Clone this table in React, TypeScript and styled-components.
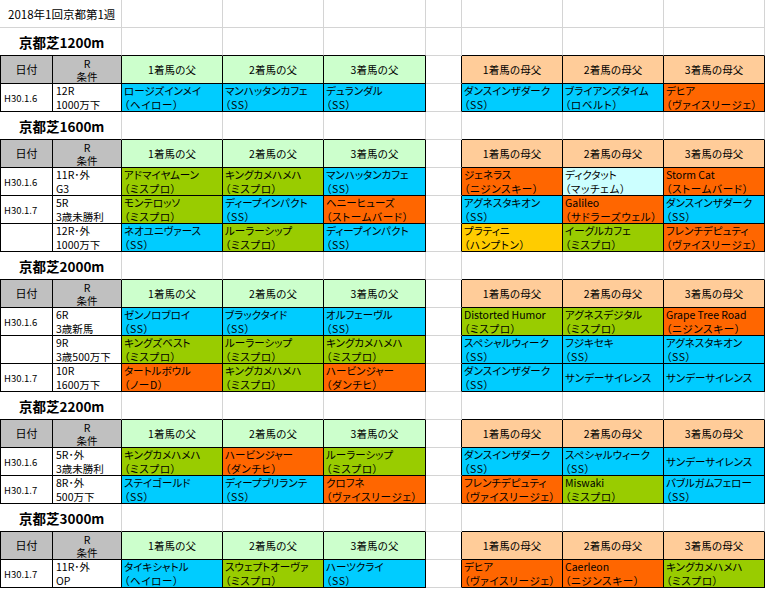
import styled, { createGlobalStyle } from "styled-components";

const GlobalStyle = createGlobalStyle`
  html, body { margin: 0; padding: 0; background: #fff; }
  body {
    font-family: "Noto Sans CJK JP", "Noto Sans", sans-serif;
    color: #000;
  }
`;

const GRID = "#d4d4d4";
const INK = "#000";

const fills = {
  cyan: "#00ccff",
  green: "#99cc00",
  orange: "#ff6600",
  ice: "#ccffff",
  gold: "#ffcc00",
} as const;

type Fill = keyof typeof fills;
type Horse = [string, string, Fill];

interface Race {
  date: string;
  race: [string, string];
  sires: Horse[];
  dams: Horse[];
}

interface Section {
  title: string;
  rows: Race[];
}

const sections: Section[] = [
  {
    title: "京都芝1200m",
    rows: [
      {
        date: "H30.1.6",
        race: ["12R", "1000万下"],
        sires: [
          ["ロージズインメイ", "（ヘイロー）", "cyan"],
          ["マンハッタンカフェ", "（SS）", "cyan"],
          ["デュランダル", "（SS）", "cyan"],
        ],
        dams: [
          ["ダンスインザダーク", "（SS）", "cyan"],
          ["ブライアンズタイム", "（ロベルト）", "cyan"],
          ["デヒア", "（ヴァイスリージェ）", "orange"],
        ],
      },
    ],
  },
  {
    title: "京都芝1600m",
    rows: [
      {
        date: "H30.1.6",
        race: ["11R･外", "G3"],
        sires: [
          ["アドマイヤムーン", "（ミスプロ）", "green"],
          ["キングカメハメハ", "（ミスプロ）", "green"],
          ["マンハッタンカフェ", "（SS）", "cyan"],
        ],
        dams: [
          ["ジェネラス", "（ニジンスキー）", "orange"],
          ["ディクタット", "（マッチェム）", "ice"],
          ["Storm Cat", "（ストームバード）", "orange"],
        ],
      },
      {
        date: "H30.1.7",
        race: ["5R", "3歳未勝利"],
        sires: [
          ["モンテロッソ", "（ミスプロ）", "green"],
          ["ディープインパクト", "（SS）", "cyan"],
          ["ヘニーヒューズ", "（ストームバード）", "orange"],
        ],
        dams: [
          ["アグネスタキオン", "（SS）", "cyan"],
          ["Galileo", "（サドラーズウェル）", "orange"],
          ["ダンスインザダーク", "（SS）", "cyan"],
        ],
      },
      {
        date: "",
        race: ["12R･外", "1000万下"],
        sires: [
          ["ネオユニヴァース", "（SS）", "cyan"],
          ["ルーラーシップ", "（ミスプロ）", "green"],
          ["ディープインパクト", "（SS）", "cyan"],
        ],
        dams: [
          ["プラティニ", "（ハンプトン）", "gold"],
          ["イーグルカフェ", "（ミスプロ）", "green"],
          ["フレンチデピュティ", "（ヴァイスリージェ）", "orange"],
        ],
      },
    ],
  },
  {
    title: "京都芝2000m",
    rows: [
      {
        date: "H30.1.6",
        race: ["6R", "3歳新馬"],
        sires: [
          ["ゼンノロブロイ", "（SS）", "cyan"],
          ["ブラックタイド", "（SS）", "cyan"],
          ["オルフェーヴル", "（SS）", "cyan"],
        ],
        dams: [
          ["Distorted Humor", "（ミスプロ）", "green"],
          ["アグネスデジタル", "（ミスプロ）", "green"],
          ["Grape Tree Road", "（ニジンスキー）", "orange"],
        ],
      },
      {
        date: "",
        race: ["9R", "3歳500万下"],
        sires: [
          ["キングズベスト", "（ミスプロ）", "green"],
          ["ルーラーシップ", "（ミスプロ）", "green"],
          ["キングカメハメハ", "（ミスプロ）", "green"],
        ],
        dams: [
          ["スペシャルウィーク", "（SS）", "cyan"],
          ["フジキセキ", "（SS）", "cyan"],
          ["アグネスタキオン", "（SS）", "cyan"],
        ],
      },
      {
        date: "H30.1.7",
        race: ["10R", "1600万下"],
        sires: [
          ["タートルボウル", "（ノーD）", "orange"],
          ["キングカメハメハ", "（ミスプロ）", "green"],
          ["ハービンジャー", "（ダンチヒ）", "orange"],
        ],
        dams: [
          ["ダンスインザダーク", "（SS）", "cyan"],
          ["サンデーサイレンス", "", "cyan"],
          ["サンデーサイレンス", "", "cyan"],
        ],
      },
    ],
  },
  {
    title: "京都芝2200m",
    rows: [
      {
        date: "H30.1.6",
        race: ["5R･外", "3歳未勝利"],
        sires: [
          ["キングカメハメハ", "（ミスプロ）", "green"],
          ["ハービンジャー", "（ダンチヒ）", "orange"],
          ["ルーラーシップ", "（ミスプロ）", "green"],
        ],
        dams: [
          ["ダンスインザダーク", "（SS）", "cyan"],
          ["スペシャルウィーク", "（SS）", "cyan"],
          ["サンデーサイレンス", "", "cyan"],
        ],
      },
      {
        date: "H30.1.7",
        race: ["8R･外", "500万下"],
        sires: [
          ["ステイゴールド", "（SS）", "cyan"],
          ["ディープブリランテ", "（SS）", "cyan"],
          ["クロフネ", "（ヴァイスリージェ）", "orange"],
        ],
        dams: [
          ["フレンチデピュティ", "（ヴァイスリージェ）", "orange"],
          ["Miswaki", "（ミスプロ）", "green"],
          ["バブルガムフェロー", "（SS）", "cyan"],
        ],
      },
    ],
  },
  {
    title: "京都芝3000m",
    rows: [
      {
        date: "H30.1.7",
        race: ["11R･外", "OP"],
        sires: [
          ["タイキシャトル", "（ヘイロー）", "cyan"],
          ["スウェプトオーヴァ", "（ミスプロ）", "green"],
          ["ハーツクライ", "（SS）", "cyan"],
        ],
        dams: [
          ["デヒア", "（ヴァイスリージェ）", "orange"],
          ["Caerleon", "（ニジンスキー）", "orange"],
          ["キングカメハメハ", "（ミスプロ）", "green"],
        ],
      },
    ],
  },
];

const Sheet = styled.div`
  display: grid;
  grid-template-columns: 53px 69px 101px 101px 102px 36px 101px 101px 101px;
  grid-auto-rows: 28px;
  width: 765px;
`;

const Group = styled.div`
  display: contents;
`;

const Cell = styled.div<{ $bg?: string; $right?: string; $bottom?: string; $left?: boolean }>`
  box-sizing: border-box;
  min-width: 0;
  background: ${(p) => p.$bg ?? "#fff"};
  border-right: 1px solid ${(p) => p.$right ?? GRID};
  border-bottom: 1px solid ${(p) => p.$bottom ?? GRID};
  border-left: ${(p) => (p.$left ? `1px solid ${INK}` : "none")};
  white-space: nowrap;
  overflow: hidden;
`;

const DocTitle = styled(Cell)`
  grid-column: span 2;
  display: flex;
  align-items: center;
  padding-left: 8px;
  font-size: 11.5px;
`;

const SectionTitle = styled(Cell)`
  grid-column: span 2;
  display: flex;
  align-items: center;
  padding-left: 19px;
  font-size: 13.5px;
  font-weight: bold;
`;

const Head = styled(Cell)<{ $big?: boolean }>`
  display: flex;
  flex-direction: column;
  align-items: center;
  justify-content: center;
  font-size: ${(p) => (p.$big ? "11px" : "10.5px")};
  line-height: 13px;
`;

const StackLine = styled.span`
  display: block;
  height: 13px;
  line-height: 13px;
  font-size: 10.5px;
`;

const DateCell = styled(Cell)`
  display: flex;
  align-items: center;
  padding-left: 3px;
  font-size: 9.5px;
`;

const RaceCell = styled(Cell)`
  display: flex;
  flex-direction: column;
  justify-content: center;
  padding-left: 3px;
  font-size: 10.5px;
  line-height: 13.5px;
`;

const HorseCell = styled(Cell)`
  display: flex;
  flex-direction: column;
  justify-content: center;
  padding-left: 2px;
  font-size: 10.5px;
  line-height: 13.5px;
  font-feature-settings: "palt";
`;

const Lineage = styled.span`
  letter-spacing: 0.7px;
`;

const blanks = (n: number, bottom: string, key: string) =>
  Array.from({ length: n }, (_, i) => <Cell key={`${key}-${i}`} $bottom={bottom} />);

function TitleRow({ label, doc }: { label: string; doc?: boolean }) {
  const bottom = doc ? GRID : INK;
  return (
    <>
      {doc ? <DocTitle>{label}</DocTitle> : <SectionTitle $bottom={bottom}>{label}</SectionTitle>}
      {blanks(3, bottom, `${label}-a`)}
      <Cell />
      {blanks(3, bottom, `${label}-b`)}
    </>
  );
}

function HeaderRow() {
  return (
    <>
      <Head $big $left $bg="#c0c0c0" $right={INK} $bottom={INK}>日付</Head>
      <Head $bg="#c0c0c0" $right={INK} $bottom={INK}>
        <StackLine>R</StackLine>
        <StackLine>条件</StackLine>
      </Head>
      {[1, 2, 3].map((n) => (
        <Head key={`s${n}`} $bg="#ccffcc" $right={INK} $bottom={INK}>
          {n}着馬の父
        </Head>
      ))}
      <Cell $right={INK} />
      {[1, 2, 3].map((n) => (
        <Head key={`d${n}`} $bg="#ffcc99" $right={INK} $bottom={INK}>
          {n}着馬の母父
        </Head>
      ))}
    </>
  );
}

function HorseBox({ horse }: { horse: Horse }) {
  const [name, line, fill] = horse;
  return (
    <HorseCell $bg={fills[fill]} $right={INK} $bottom={INK}>
      <span>{name}</span>
      {line && <Lineage>{line}</Lineage>}
    </HorseCell>
  );
}

function RaceRow({ row }: { row: Race }) {
  return (
    <>
      <DateCell $left $right={INK} $bottom={INK}>{row.date}</DateCell>
      <RaceCell $right={INK} $bottom={INK}>
        <span>{row.race[0]}</span>
        <span>{row.race[1]}</span>
      </RaceCell>
      {row.sires.map((h, i) => (
        <HorseBox key={`s${i}`} horse={h} />
      ))}
      <Cell $right={INK} />
      {row.dams.map((h, i) => (
        <HorseBox key={`d${i}`} horse={h} />
      ))}
    </>
  );
}

export default function App() {
  return (
    <>
      <GlobalStyle />
      <Sheet>
        <TitleRow label="2018年1回京都第1週" doc />
        {sections.map((s) => (
          <Group key={s.title}>
            <TitleRow label={s.title} />
            <HeaderRow />
            {s.rows.map((r, i) => (
              <RaceRow key={i} row={r} />
            ))}
          </Group>
        ))}
      </Sheet>
    </>
  );
}
